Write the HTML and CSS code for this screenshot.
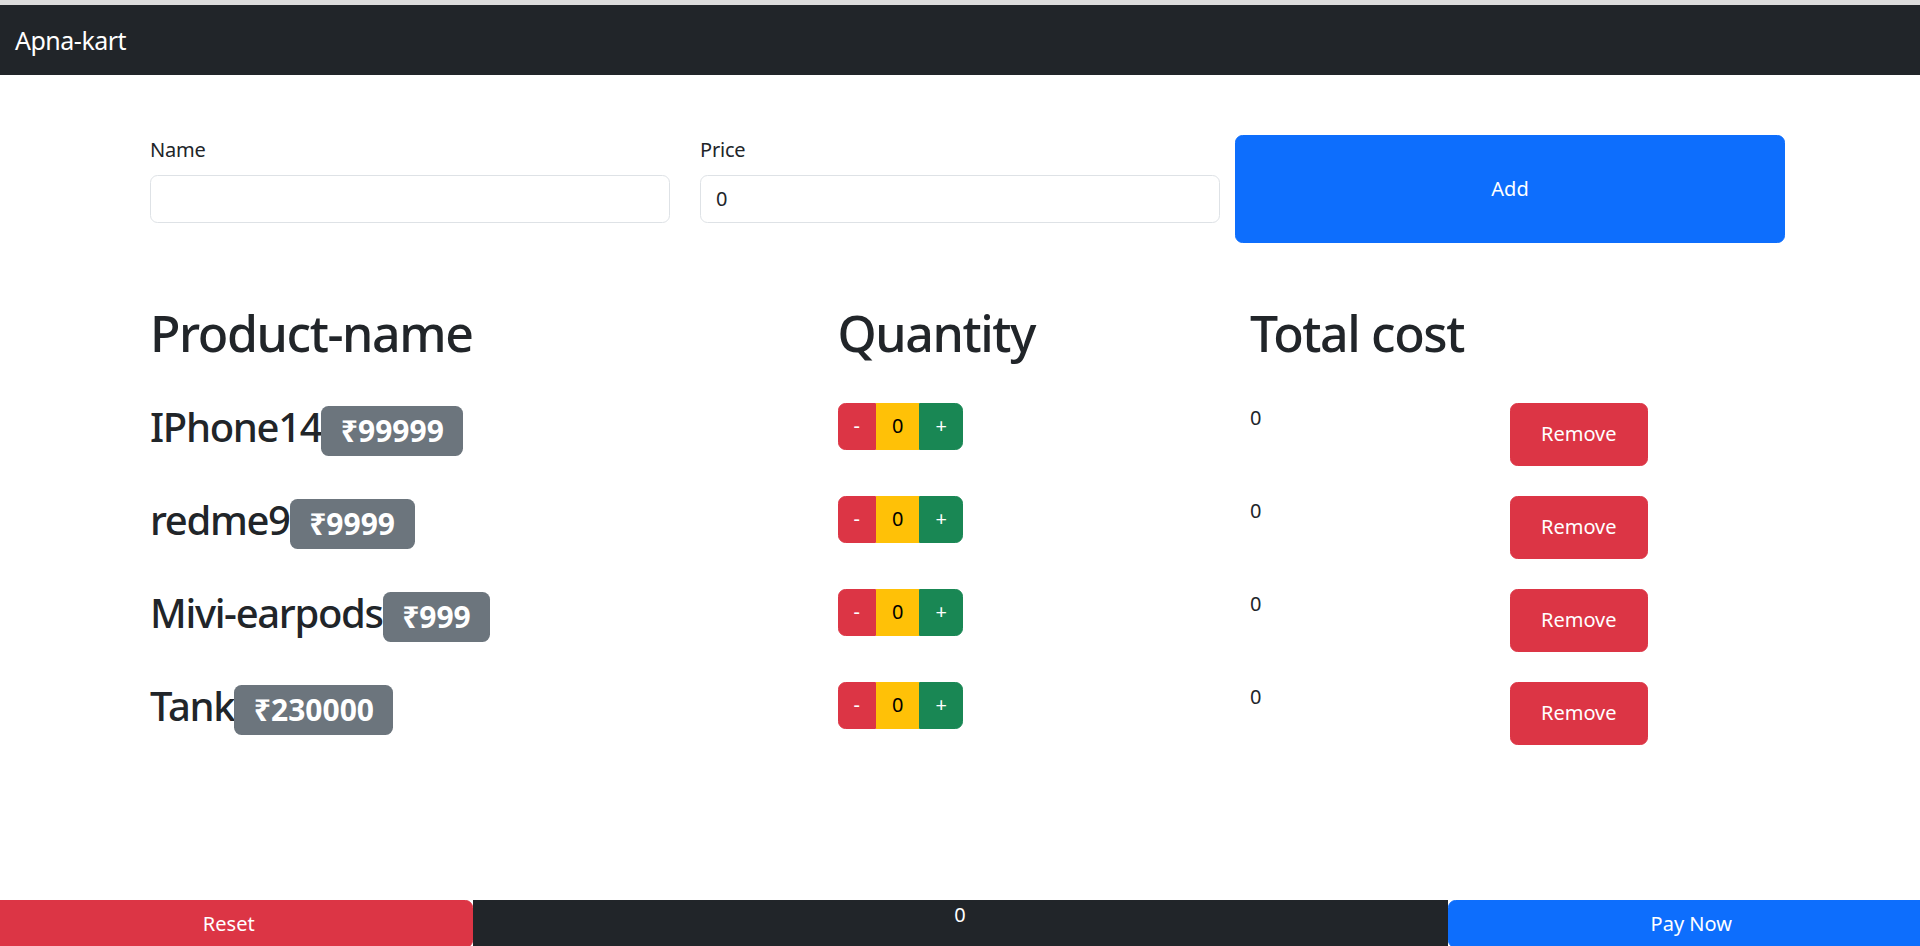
FILE: index.html
```html
<!DOCTYPE html>
<html lang="en">
<head>
<meta charset="utf-8">
<title>Apna-kart</title>
<link rel="stylesheet" href="styles.css">
</head>
<body>
<div class="topline"></div>
<nav class="navbar"><span class="brand">Apna-kart</span></nav>
<main class="container">
  <form class="row form-row">
    <div class="col col-4 field">
      <label class="form-label">Name</label>
      <input class="form-control" type="text" value="">
    </div>
    <div class="col col-4 field">
      <label class="form-label">Price</label>
      <input class="form-control" type="text" value="0">
    </div>
    <button type="button" class="btn btn-primary col-4 add-btn">Add</button>
  </form>

  <div class="row head-row">
    <div class="col col-5"><h1>Product-name</h1></div>
    <div class="col col-3"><h1>Quantity</h1></div>
    <div class="col col-4"><h1>Total cost</h1></div>
  </div>

  <div class="row item-row">
    <div class="col col-5"><h2>IPhone14<span class="badge">₹99999</span></h2></div>
    <div class="col col-3">
      <div class="btn-group">
        <button class="btn btn-danger">-</button><button class="btn btn-warning">0</button><button class="btn btn-success">+</button>
      </div>
    </div>
    <div class="col col-2 total">0</div>
    <button class="btn btn-danger col-1 remove-btn">Remove</button>
  </div>

  <div class="row item-row">
    <div class="col col-5"><h2>redme9<span class="badge">₹9999</span></h2></div>
    <div class="col col-3">
      <div class="btn-group">
        <button class="btn btn-danger">-</button><button class="btn btn-warning">0</button><button class="btn btn-success">+</button>
      </div>
    </div>
    <div class="col col-2 total">0</div>
    <button class="btn btn-danger col-1 remove-btn">Remove</button>
  </div>

  <div class="row item-row">
    <div class="col col-5"><h2>Mivi-earpods<span class="badge">₹999</span></h2></div>
    <div class="col col-3">
      <div class="btn-group">
        <button class="btn btn-danger">-</button><button class="btn btn-warning">0</button><button class="btn btn-success">+</button>
      </div>
    </div>
    <div class="col col-2 total">0</div>
    <button class="btn btn-danger col-1 remove-btn">Remove</button>
  </div>

  <div class="row item-row">
    <div class="col col-5"><h2>Tank<span class="badge">₹230000</span></h2></div>
    <div class="col col-3">
      <div class="btn-group">
        <button class="btn btn-danger">-</button><button class="btn btn-warning">0</button><button class="btn btn-success">+</button>
      </div>
    </div>
    <div class="col col-2 total">0</div>
    <button class="btn btn-danger col-1 remove-btn">Remove</button>
  </div>
</main>
<footer class="footer-row">
  <button class="btn btn-danger foot-side">Reset</button>
  <div class="foot-total">0</div>
  <button class="btn btn-primary foot-side">Pay Now</button>
</footer>
</body>
</html>
```

FILE: styles.css
```css
* { box-sizing: border-box; }

html, body {
  margin: 0;
  padding: 0;
  height: 100%;
}

body {
  font-family: "Noto Sans", "Open Sans", "DejaVu Sans", sans-serif;
  font-size: 20px;
  line-height: 30px;
  color: #212529;
  background: #fff;
  display: flex;
  flex-direction: column;
  height: 946px;
  overflow: hidden;
}

.topline {
  height: 5px;
  background: #dcdcdc;
  flex: none;
}

.navbar {
  flex: none;
  height: 70px;
  background: #212529;
  display: flex;
  align-items: center;
  padding: 0 15px;
}

.brand {
  color: #fff;
  font-size: 25px;
  line-height: 37px;
  letter-spacing: -0.02em;
}

.container {
  flex: 1 1 auto;
  width: 1650px;
  margin: 0 auto;
}

.row {
  display: flex;
  flex-wrap: nowrap;
}

.col { padding: 0 15px; }
.col-1 { width: 137.5px; flex: none; }
.col-2 { width: 275px; flex: none; }
.col-3 { width: 412.5px; flex: none; }
.col-4 { width: 550px; flex: none; }
.col-5 { width: 687.5px; flex: none; }

.form-row { margin: 60px 0 0; }

.field { padding-bottom: 20px; }

.form-label {
  display: block;
  font-size: 20px;
  line-height: 30px;
  margin-bottom: 10px;
  letter-spacing: -0.01em;
}

.form-control {
  display: block;
  width: 100%;
  height: 47.5px;
  padding: 7.5px 15px;
  font-family: inherit;
  font-size: 20px;
  line-height: 30px;
  color: #212529;
  border: 1px solid #dee2e6;
  border-radius: 7.5px;
  background: #fff;
}

.btn {
  font-family: inherit;
  font-size: 20px;
  line-height: 30px;
  padding: 7.5px 15px;
  border: 1px solid transparent;
  border-radius: 7.5px;
  color: #fff;
  cursor: pointer;
  text-align: center;
}

.btn-primary { background: #0d6efd; border-color: #0d6efd; }
.btn-danger { background: #dc3545; border-color: #dc3545; }
.btn-warning { background: #ffc107; border-color: #ffc107; color: #000; }
.btn-success { background: #198754; border-color: #198754; }

.head-row { margin-top: 60px; }

h1 {
  margin: 0 0 10px;
  font-size: 50px;
  line-height: 60px;
  font-weight: 500;
  letter-spacing: -0.028em;
}

.item-row { margin-top: 30px; }

h2 {
  margin: 0 0 10px;
  font-size: 40px;
  line-height: 48px;
  font-weight: 500;
  white-space: nowrap;
  letter-spacing: -0.033em;
}

.badge {
  display: inline-block;
  font-size: 30px;
  line-height: 30px;
  font-weight: 700;
  color: #fff;
  background: #6c757d;
  padding: 10px 19.5px;
  border-radius: 7.5px;
  vertical-align: baseline;
  letter-spacing: 0;
}

.btn-group { display: inline-flex; }
.btn-group .btn { border-radius: 0; height: 47.5px; }
.btn-group .btn:first-child { border-radius: 7.5px 0 0 7.5px; }
.btn-group .btn:last-child { border-radius: 0 7.5px 7.5px 0; }

.total {
  font-size: 20px;
  line-height: 30px;
}

.remove-btn { padding: 7.5px 0; }

.footer-row {
  flex: none;
  height: 46px;
  display: flex;
  align-items: flex-start;
  margin: 0 -15px;
  width: calc(100% + 30px);
}

.foot-side {
  width: 487.5px;
  flex: none;
  height: 47.5px;
}

.foot-total {
  flex: none;
  width: 975px;
  height: 47.5px;
  background: #212529;
  color: #fff;
  text-align: center;
  font-size: 20px;
  line-height: 30px;
}
```
